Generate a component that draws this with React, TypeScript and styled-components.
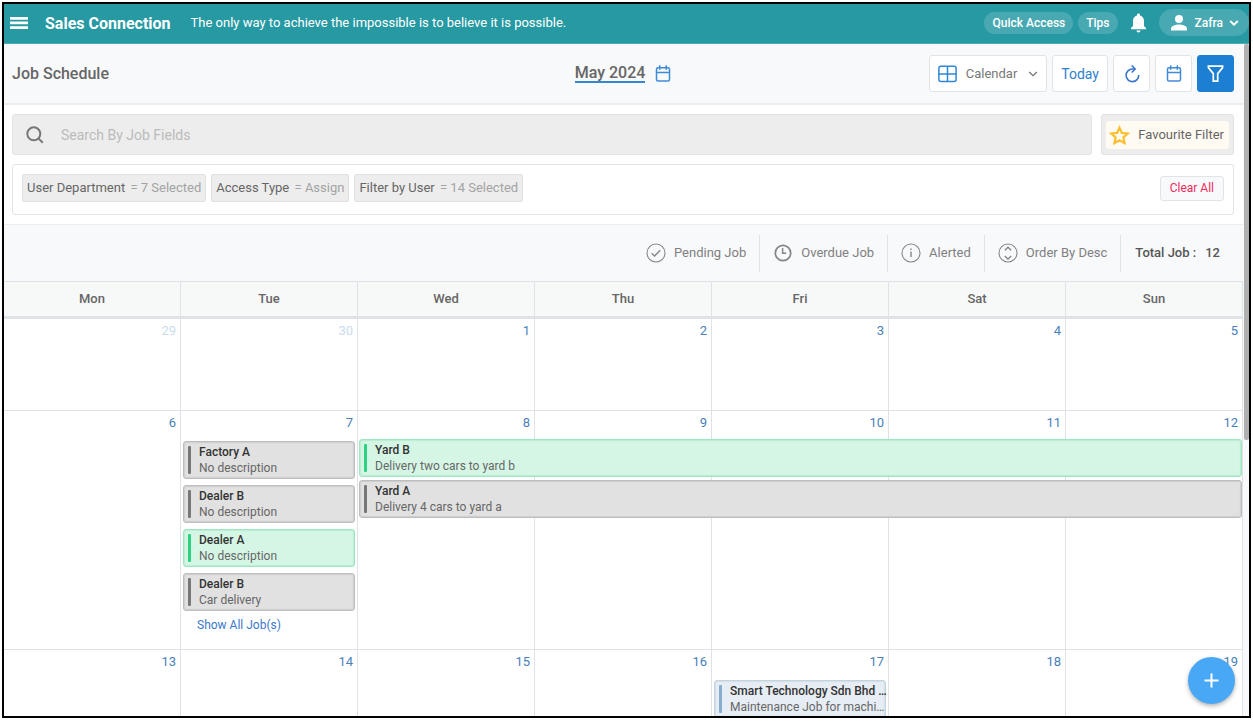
import React from "react";
import styled, { createGlobalStyle } from "styled-components";

const GlobalStyle = createGlobalStyle`
  *, *::before, *::after { box-sizing: border-box; }
  body {
    margin: 0;
    background: #fff;
    color: #666;
    font-family: Roboto, "Liberation Sans", sans-serif;
    font-size: 13px;
    line-height: 16px;
  }
  button, input { font: inherit; color: inherit; }
  button { cursor: pointer; }
  a { text-decoration: none; }
`;

const Page = styled.div`
  height: 100vh;
  padding: 2px 2px 3px;
`;

const Frame = styled.div`
  position: relative;
  display: flex;
  flex-direction: column;
  height: 100%;
  border: 2px solid #000;
  overflow: hidden;
`;

const TopBar = styled.header`
  display: flex;
  align-items: center;
  flex: none;
  height: 40px;
  padding-left: 4px;
  background: #2799a3;
  border-bottom: 1px solid #4fabb3;
  color: #fff;
`;

const MenuButton = styled.button`
  display: flex;
  padding: 0 2px 2px;
  border: 0;
  background: none;
`;

const Brand = styled.strong`
  margin-left: 15px;
  font-size: 16px;
  font-weight: 700;
`;

const Quote = styled.span`
  margin-left: 20px;
  padding-bottom: 2px;
  font-size: 13px;
`;

const TopActions = styled.div`
  display: flex;
  align-items: center;
  gap: 5px;
  margin-left: auto;
  padding-bottom: 2px;
`;

const Pill = styled.button`
  height: 22px;
  padding: 0 8px;
  border: 0;
  border-radius: 11px;
  background: #49a9b2;
  font-size: 12px;
  font-weight: 500;
`;

const BellButton = styled.button`
  display: flex;
  padding: 0;
  margin: 0 7px;
  border: 0;
  background: none;
`;

const UserPill = styled.button`
  display: flex;
  align-items: center;
  gap: 6px;
  height: 27px;
  padding: 0 10px;
  border: 0;
  border-radius: 14px;
  background: #49a9b2;
  font-size: 12px;
  font-weight: 500;
`;

const Body = styled.div`
  display: flex;
  flex: 1;
  min-height: 0;
`;

const Main = styled.main`
  flex: 1;
  min-width: 0;
  overflow: hidden;
`;

const ScrollTrack = styled.div`
  width: 6px;
  padding-left: 1px;
  background: #f8f9fb;
`;

const ScrollThumb = styled.div`
  height: 59%;
  border-radius: 2px;
  background: #b0b0b0;
`;

const Toolbar = styled.div`
  display: grid;
  grid-template-columns: 1fr auto 1fr;
  align-items: center;
  height: 61px;
  padding: 0 9px 0 8px;
  background: #f8f9fb;
  border-bottom: 2px solid #ededed;
`;

const PageTitle = styled.h1`
  margin: 0;
  font-size: 16px;
  font-weight: 500;
`;

const MonthButton = styled.button`
  display: flex;
  align-items: center;
  gap: 10px;
  padding: 0;
  border: 0;
  background: none;
  font-size: 16px;
  font-weight: 500;
`;

const MonthName = styled.span`
  border-bottom: 2px solid #3486d0;
  line-height: 17px;
`;

const ToolbarActions = styled.div`
  display: flex;
  justify-content: flex-end;
  gap: 5px;
`;

const ToolButton = styled.button<{ $active?: boolean }>`
  display: flex;
  align-items: center;
  justify-content: center;
  min-width: 37px;
  height: 37px;
  padding: 0 8px;
  border: 1px solid ${(p) => (p.$active ? "#1c7fd1" : "#e2e3e5")};
  border-radius: 3px;
  background: ${(p) => (p.$active ? "#1c7fd1" : "#fff")};
  color: #2f7fd0;
  font-size: 14px;
`;

const ViewLabel = styled.span`
  margin: 0 11px 0 9px;
  color: #777;
  font-size: 13px;
`;

const Filters = styled.section`
  display: flex;
  flex-direction: column;
  gap: 9px;
  padding: 9px 9px 9px 8px;
`;

const SearchRow = styled.div`
  display: flex;
  gap: 9px;
  height: 41px;
`;

const SearchBox = styled.label`
  display: flex;
  align-items: center;
  flex: 1;
  gap: 17px;
  padding-left: 13px;
  border: 1px solid #e2e2e2;
  border-radius: 3px;
  background: #ededed;
`;

const SearchInput = styled.input`
  flex: 1;
  min-width: 0;
  padding: 0;
  border: 0;
  outline: 0;
  background: none;
  font-size: 14px;
  &::placeholder { color: #bbb; opacity: 1; }
`;

const FavouriteWrap = styled.div`
  padding: 6px 4px;
  border: 1px solid #e2e2e2;
  border-radius: 3px;
  background: #ededed;
`;

const FavouriteButton = styled.button`
  display: flex;
  align-items: center;
  gap: 8px;
  height: 28px;
  padding: 0 5px 0 3px;
  border: 0;
  border-radius: 3px;
  background: #fffbf2;
  font-size: 13px;
`;

const ChipRow = styled.div`
  display: flex;
  align-items: center;
  gap: 5px;
  height: 51px;
  padding: 0 9px;
  border: 1px solid #e4e4e4;
  border-radius: 3px;
`;

const Chip = styled.button`
  height: 28px;
  margin-bottom: 3px;
  padding: 0 4px;
  border: 1px solid #e0e0e0;
  border-radius: 2px;
  background: #ededed;
  font-size: 13px;
`;

const ChipValue = styled.span`
  margin-left: 2px;
  color: #a3a3a3;
`;

const ClearButton = styled.button`
  height: 25px;
  margin: 0 0 3px auto;
  padding: 0 9px;
  border: 1px solid #e2e3e5;
  border-radius: 3px;
  background: #f8f9fb;
  color: #ee2a5b;
  font-size: 12px;
`;

const StatusBar = styled.div`
  display: flex;
  align-items: center;
  justify-content: flex-end;
  height: 57px;
  padding-right: 9px;
  border-top: 1px solid #ededed;
  background: #f8f9fb;
`;

const StatusButton = styled.button`
  display: flex;
  align-items: center;
  gap: 8px;
  height: 37px;
  padding: 0 13px;
  border: 0;
  border-right: 1px solid #e0e2e5;
  background: none;
  color: #808080;
  font-size: 13px;
`;

const Total = styled.div`
  display: flex;
  gap: 9px;
  padding: 0 14px;
  color: #555;
  font-weight: 500;
`;

const DayNames = styled.div`
  display: grid;
  grid-template-columns: repeat(7, 1fr);
  height: 38px;
  border-top: 1px solid #dfe2e6;
  border-bottom: 3px solid #dfe2e6;
  background: #f7f9f8;
`;

const DayName = styled.div`
  display: flex;
  align-items: center;
  justify-content: center;
  border-right: 1px solid #dfe2e6;
  font-size: 13px;
  font-weight: 500;
`;

const Week = styled.div<{ $tall?: boolean }>`
  display: grid;
  grid-template-columns: repeat(7, 1fr);
  grid-template-rows: 28px auto;
  align-items: start;
  min-height: ${(p) => (p.$tall ? 239 : 92)}px;
  border-bottom: 1px solid #dfe2e6;
`;

const Day = styled.div<{ $column: number }>`
  grid-row: 1 / 3;
  grid-column: ${(p) => p.$column};
  align-self: stretch;
  padding: 4px;
  border-right: 1px solid #dfe2e6;
  text-align: right;
`;

const DayLink = styled.a<{ $muted?: boolean }>`
  color: ${(p) => (p.$muted ? "#c9dcee" : "#4a7fb9")};
  font-size: 13px;
`;

const DayJobs = styled.div<{ $column: number }>`
  grid-row: 2;
  grid-column: ${(p) => p.$column};
  display: flex;
  flex-direction: column;
  gap: 6px;
  min-width: 0;
  padding: 2px 3px 0 2px;
`;

const SpanJobs = styled.div<{ $from: number; $to: number }>`
  grid-row: 2;
  grid-column: ${(p) => p.$from} / ${(p) => p.$to};
  display: flex;
  flex-direction: column;
  gap: 3px;
  padding: 0 1px;
`;

const tones = {
  grey: { fill: "#e1e1e1", edge: "#bdbdbd", bar: "#777" },
  green: { fill: "#d6f6e5", edge: "#9de6c0", bar: "#2fd282" },
  blue: { fill: "#e7edf4", edge: "#c3d3de", bar: "#86add0" },
};
type Tone = keyof typeof tones;

const Card = styled.button<{ $tone: Tone }>`
  display: flex;
  align-items: center;
  gap: 8px;
  width: 100%;
  height: 38px;
  padding: 0 0 0 4px;
  border: 1px solid ${(p) => tones[p.$tone].edge};
  border-radius: 3px;
  background: ${(p) => tones[p.$tone].fill};
  box-shadow: inset 0 0 1px 1px ${(p) => tones[p.$tone].edge}80;
  text-align: left;
`;

const CardBar = styled.span<{ $tone: Tone }>`
  flex: none;
  width: 3px;
  height: 28px;
  border-radius: 1px;
  background: ${(p) => tones[p.$tone].bar};
`;

const CardText = styled.span`
  display: flex;
  flex-direction: column;
  min-width: 0;
  font-size: 12px;
`;

const CardLine = styled.span<{ $title?: boolean }>`
  white-space: nowrap;
  color: ${(p) => (p.$title ? "#333" : "#666")};
  font-weight: ${(p) => (p.$title ? 500 : 400)};
`;

const ShowAll = styled.a`
  padding: 0 14px;
  color: #3b78cc;
  font-size: 12px;
`;

const AddButton = styled.button`
  position: absolute;
  right: 14px;
  bottom: 12px;
  display: flex;
  align-items: center;
  justify-content: center;
  width: 47px;
  height: 47px;
  padding: 0;
  border: 0;
  border-radius: 50%;
  background: #49a8f5;
  box-shadow: 0 2px 4px rgba(0, 0, 0, 0.3);
`;

const CalendarIcon = () => (
  <svg width="16" height="18" viewBox="0 0 16 18" fill="none" stroke="#3f8bd8" strokeWidth="1.5">
    <rect x="1.5" y="2.7" width="13" height="13.3" rx="1.6" />
    <path d="M1.5 7.5h13M4.7 0.2v4.6M11.3 0.2v4.6" />
  </svg>
);

const Chevron = ({ color, weight = 1.3 }: { color: string; weight?: number }) => (
  <svg width="10" height="8" viewBox="0 0 10 8" fill="none" stroke={color} strokeWidth={weight}>
    <path d="M1.2 2l3.8 3.7L8.8 2" />
  </svg>
);

const StatusIcon = ({ kind }: { kind: "check" | "clock" | "info" | "order" }) => (
  <svg width="20" height="20" viewBox="0 0 20 20" fill="none" stroke="#858585" strokeWidth="1.2">
    <circle cx="10" cy="10" r={kind === "clock" ? 7.7 : 9} strokeWidth={kind === "clock" ? 1.7 : 1.1} />
    {kind === "check" && <path d="M5.6 10.3l3 2.7 5.6-5.7" strokeWidth="1.4" />}
    {kind === "clock" && <path d="M9.6 5v5.2h3.6" strokeWidth="1.5" />}
    {kind === "info" && <path d="M10 5.4v1.5M10 8.4v5.6" strokeWidth="1.4" />}
    {kind === "order" && <path d="M6.8 7.2L10 4.2l3.2 3M6.8 13l3.2 3 3.2-3" strokeWidth="1.4" />}
  </svg>
);

type Job = { title: string; detail: string; tone: Tone };

const JobCard = ({ title, detail, tone }: Job) => (
  <Card type="button" $tone={tone}>
    <CardBar $tone={tone} />
    <CardText>
      <CardLine $title>{title}</CardLine>
      <CardLine>{detail}</CardLine>
    </CardText>
  </Card>
);

const dayNames = ["Mon", "Tue", "Wed", "Thu", "Fri", "Sat", "Sun"];

const tuesdayJobs: Job[] = [
  { title: "Factory A", detail: "No description", tone: "grey" },
  { title: "Dealer B", detail: "No description", tone: "grey" },
  { title: "Dealer A", detail: "No description", tone: "green" },
  { title: "Dealer B", detail: "Car delivery", tone: "grey" },
];

const yardJobs: Job[] = [
  { title: "Yard B", detail: "Delivery two cars to yard b", tone: "green" },
  { title: "Yard A", detail: "Delivery 4 cars to yard a", tone: "grey" },
];

const filters = [
  ["User Department", "7 Selected"],
  ["Access Type", "Assign"],
  ["Filter by User", "14 Selected"],
];

const Days = ({ dates }: { dates: number[] }) => (
  <>
    {dates.map((date, i) => (
      <Day key={date} $column={i + 1}>
        <DayLink href="#" $muted={dates[0] === 29 && date > 20}>{date}</DayLink>
      </Day>
    ))}
  </>
);

export default function App() {
  return (
    <>
      <GlobalStyle />
      <Page>
        <Frame>
          <TopBar>
            <MenuButton type="button" aria-label="Menu">
              <svg width="18" height="14" viewBox="0 0 18 14" fill="#fff">
                <path d="M0 1h18v2.7H0zM0 5.6h18v2.7H0zM0 10.2h18v2.7H0z" />
              </svg>
            </MenuButton>
            <Brand>Sales Connection</Brand>
            <Quote>The only way to achieve the impossible is to believe it is possible.</Quote>
            <TopActions>
              <Pill type="button">Quick Access</Pill>
              <Pill type="button">Tips</Pill>
              <BellButton type="button" aria-label="Notifications">
                <svg width="17" height="20" viewBox="0 0 17 20" fill="#fff">
                  <path d="M8.5 0.5c.9 0 1.5.6 1.5 1.5v.6c2.5.7 4 2.8 4 5.4v5l2 2v1.2H1v-1.2l2-2V8c0-2.6 1.5-4.700 4-5.400V2c0-.9.6-1.5 1.5-1.5zM6.500 17.400h4c0 1.100-.9 2-2 2s-2-.9-2-2z" />
                </svg>
              </BellButton>
              <UserPill type="button">
                <svg width="20" height="18" viewBox="0 0 20 18" fill="#fff">
                  <circle cx="10" cy="5" r="4" />
                  <path d="M2 16.5v-2c0-2.7 5.3-4 8-4s8 1.3 8 4v2z" />
                </svg>
                Zafra
                <Chevron color="#fff" weight={2} />
              </UserPill>
            </TopActions>
          </TopBar>
          <Body>
            <Main>
              <Toolbar>
                <PageTitle>Job Schedule</PageTitle>
                <MonthButton type="button">
                  <MonthName>May 2024</MonthName>
                  <CalendarIcon />
                </MonthButton>
                <ToolbarActions>
                  <ToolButton type="button">
                    <svg width="19" height="18" viewBox="0 0 19 18" fill="none" stroke="#2f86d4" strokeWidth="1.5">
                      <rect x="0.9" y="1.2" width="17.2" height="15.4" rx="2" />
                      <path d="M9.5 1.2v15.4M0.9 8.9h17.2" />
                    </svg>
                    <ViewLabel>Calendar</ViewLabel>
                    <Chevron color="#777" />
                  </ToolButton>
                  <ToolButton type="button">Today</ToolButton>
                  <ToolButton type="button" aria-label="Refresh">
                    <svg width="16" height="18" viewBox="0 0 16 18" fill="none" stroke="#3a78c9" strokeWidth="1.6">
                      <path d="M10.5 4H8.5a6.3 6.3 0 1 0 6.2 6" />
                      <path d="M7.7 0.5L11.2 4L7.7 7.5" />
                    </svg>
                  </ToolButton>
                  <ToolButton type="button" aria-label="Pick a date">
                    <CalendarIcon />
                  </ToolButton>
                  <ToolButton type="button" aria-label="Filter" $active>
                    <svg width="17" height="18" viewBox="0 0 17 18" fill="none" stroke="#fff" strokeWidth="1.7">
                      <path d="M1.4 1.2h14.2v1.4L10.7 8.6v7.6H6.3V8.6L1.4 2.6z" />
                    </svg>
                  </ToolButton>
                </ToolbarActions>
              </Toolbar>

              <Filters>
                <SearchRow>
                  <SearchBox>
                    <svg width="18" height="18" viewBox="0 0 18 18" fill="none" stroke="#777" strokeWidth="2">
                      <circle cx="7.8" cy="7.8" r="6.5" />
                      <path d="M12.4 12.4l4.4 4.4" />
                    </svg>
                    <SearchInput type="search" placeholder="Search By Job Fields" aria-label="Search By Job Fields" />
                  </SearchBox>
                  <FavouriteWrap>
                    <FavouriteButton type="button">
                      <svg width="21" height="20" viewBox="0 0 21 20" fill="none" stroke="#fcbf2f" strokeWidth="2.2">
                        <path d="M10.5 2.6l2.4 5.3 5.8.6-4.3 3.9 1.2 5.7-5.1-2.9-5.1 2.9 1.2-5.7-4.3-3.9 5.8-.6z" />
                      </svg>
                      Favourite Filter
                    </FavouriteButton>
                  </FavouriteWrap>
                </SearchRow>
                <ChipRow>
                  {filters.map(([name, value]) => (
                    <Chip type="button" key={name}>
                      {name} <ChipValue>= {value}</ChipValue>
                    </Chip>
                  ))}
                  <ClearButton type="button">Clear All</ClearButton>
                </ChipRow>
              </Filters>

              <StatusBar>
                <StatusButton type="button"><StatusIcon kind="check" />Pending Job</StatusButton>
                <StatusButton type="button"><StatusIcon kind="clock" />Overdue Job</StatusButton>
                <StatusButton type="button"><StatusIcon kind="info" />Alerted</StatusButton>
                <StatusButton type="button"><StatusIcon kind="order" />Order By Desc</StatusButton>
                <Total><span>Total Job :</span><span>12</span></Total>
              </StatusBar>

              <DayNames>
                {dayNames.map((name) => <DayName key={name}>{name}</DayName>)}
              </DayNames>
              <Week>
                <Days dates={[29, 30, 1, 2, 3, 4, 5]} />
              </Week>
              <Week $tall>
                <Days dates={[6, 7, 8, 9, 10, 11, 12]} />
                <DayJobs $column={2}>
                  {tuesdayJobs.map((job, i) => <JobCard key={i} {...job} />)}
                  <ShowAll href="#">Show All Job(s)</ShowAll>
                </DayJobs>
                <SpanJobs $from={3} $to={8}>
                  {yardJobs.map((job) => <JobCard key={job.title} {...job} />)}
                </SpanJobs>
              </Week>
              <Week>
                <Days dates={[13, 14, 15, 16, 17, 18, 19]} />
                <DayJobs $column={5}>
                  <JobCard title="Smart Technology Sdn Bhd …" detail="Maintenance Job for machi…" tone="blue" />
                </DayJobs>
              </Week>
            </Main>
            <ScrollTrack><ScrollThumb /></ScrollTrack>
          </Body>
          <AddButton type="button" aria-label="Add job">
            <svg width="15" height="15" viewBox="0 0 15 15" stroke="#fff" strokeWidth="2">
              <path d="M7.5 0.5v14M0.5 7.5h14" />
            </svg>
          </AddButton>
        </Frame>
      </Page>
    </>
  );
}
